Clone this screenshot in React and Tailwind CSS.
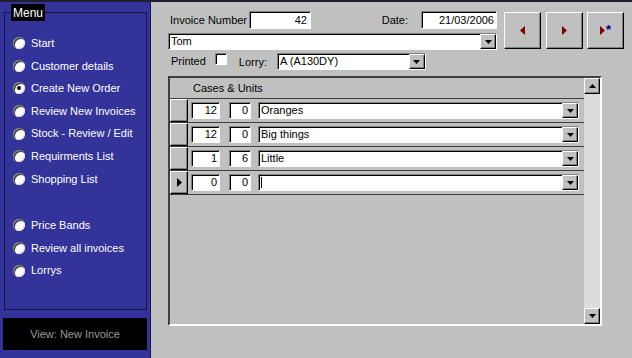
import React from 'react';

const MENU_TOP = [
  { label: 'Start' },
  { label: 'Customer details' },
  { label: 'Create New Order', on: true },
  { label: 'Review New Invoices' },
  { label: 'Stock - Review / Edit' },
  { label: 'Requirments List' },
  { label: 'Shopping List' },
];
const MENU_BOTTOM = ['Price Bands', 'Review all invoices', 'Lorrys'];

const LINES = [
  { cases: 12, units: 0, desc: 'Oranges' },
  { cases: 12, units: 0, desc: 'Big things' },
  { cases: 1, units: 6, desc: 'Little' },
  { cases: 0, units: 0, desc: '', current: true },
];

const sunken = 'bg-white text-black border border-t-[#808080] border-l-[#808080] border-b-white border-r-white shadow-[inset_1px_1px_0_#000]';
const raised = 'bg-[#c0c0c0] border border-t-white border-l-white border-b-[#000] border-r-[#000] shadow-[inset_-1px_-1px_0_#808080]';

function Radio({ on }) {
  return (
    <span className="w-[12px] h-[12px] rounded-full bg-white flex items-center justify-center shrink-0 shadow-[inset_1px_1px_0_#808080,inset_2px_2px_0_#404040,inset_-1px_-1px_0_#e0e0e0]">
      {on && <span className="w-[4px] h-[4px] rounded-full bg-black" />}
    </span>
  );
}

function DropArrow() {
  return (
    <span className={`${raised} w-[16px] h-full flex items-center justify-center shrink-0`}>
      <svg width="7" height="4" viewBox="0 0 7 4"><path d="M0 0h7L3.5 4z" fill="#000" /></svg>
    </span>
  );
}

function Combo({ value, className = '', cursor }) {
  return (
    <div className={`${sunken} flex items-stretch h-[17px] ${className}`}>
      <div className="flex-1 pl-[2px] flex items-center leading-none truncate">
        {cursor && <span className="w-[1px] h-[11px] bg-black" />}
        {value}
      </div>
      <DropArrow />
    </div>
  );
}

function NavButton({ children }) {
  return (
    <button className={`${raised} w-[37px] h-[37px] flex items-center justify-center`}>
      {children}
    </button>
  );
}

export default function App() {
  return (
    <div className="w-[632px] h-[358px] flex border-t-2 border-[#202030] overflow-hidden text-[11px] text-black" style={{ fontFamily: '"Liberation Sans", Arial, sans-serif' }}>
      {/* menu */}
      <div className="w-[151px] h-full bg-[#333399] border-r border-[#18184a] shrink-0 pt-[10px]">
        <div className="relative ml-[4px] w-[143px] h-[298px] border border-[#14144e] pt-[19px]">
          <div className="absolute -top-[9px] left-[6px] bg-black text-white px-[2px] h-[17px] flex items-center text-[12px]">Menu</div>
          {MENU_TOP.map(m => (
            <div key={m.label} className="h-[22.6px] flex items-center pl-[8px] gap-[6px] text-white">
              <Radio on={m.on} />
              <span>{m.label}</span>
            </div>
          ))}
          <div className="h-[24px]" />
          {MENU_BOTTOM.map(l => (
            <div key={l} className="h-[22.6px] flex items-center pl-[8px] gap-[6px] text-white">
              <Radio />
              <span>{l}</span>
            </div>
          ))}
        </div>
        <div className="ml-[3px] mt-[8px] w-[144px] h-[32px] bg-black text-[#9a9a9a] flex items-center justify-center">
          View: New Invoice
        </div>
      </div>

      {/* invoice form */}
      <div className="flex-1 bg-[#c0c0c0] pl-[17px]">
        <div className="flex items-start">
          <div className="w-[329px] pt-[9px]">
            <div className="h-[18px] flex items-center">
              <span className="w-[81px] pl-[2px]">Invoice Number</span>
              <div className={`${sunken} w-[62px] h-[18px] flex items-center justify-end pr-[3px]`}>42</div>
              <span className="ml-auto mr-[13px]">Date:</span>
              <div className={`${sunken} w-[76px] h-[18px] flex items-center justify-end pr-[2px]`}>21/03/2006</div>
            </div>
            <Combo value="Tom" className="mt-[4px]" />
            <div className="mt-[3px] h-[17px] flex items-center">
              <span className="pl-[3px]">Printed</span>
              <span className={`${sunken} ml-[9px] w-[12px] h-[12px] -mt-[5px]`} />
              <span className="ml-[12px] mt-[2px]">Lorry:</span>
              <Combo value="A (A130DY)" className="ml-[10px] w-[149px]" />
            </div>
          </div>
          <div className="ml-[7px] mt-[10px] flex gap-[4.5px]">
            <NavButton>
              <svg width="5" height="9" viewBox="0 0 5 9"><path d="M5 0v9L0 4.5z" fill="#800000" /></svg>
            </NavButton>
            <NavButton>
              <svg width="5" height="9" viewBox="0 0 5 9"><path d="M0 0v9l5-4.5z" fill="#800000" /></svg>
            </NavButton>
            <NavButton>
              <span className="flex items-center gap-[1px]">
                <svg width="5" height="9" viewBox="0 0 5 9"><path d="M0 0v9l5-4.5z" fill="#800000" /></svg>
                <span className="text-[#000080] font-bold text-[13px] leading-none -mt-[2px]">*</span>
              </span>
            </NavButton>
          </div>
        </div>

        {/* lines subform */}
        <div className="mt-[6px] w-[434px] h-[250px] border-2 border-t-[#404040] border-l-[#404040] border-b-white border-r-white flex">
          <div className="flex-1 flex flex-col">
            <div className="h-[21px] border-b border-[#404040] flex items-center pl-[23px]">Cases &amp; Units</div>
            {LINES.map((l, i) => (
              <div key={i} className="h-[24px] border-b border-[#404040] flex items-center">
                <div className={`${raised} w-[18px] h-full shrink-0 flex items-center justify-center`}>
                  {l.current && (
                    <svg width="5" height="9" viewBox="0 0 5 9"><path d="M0 0v9l5-4.5z" fill="#000" /></svg>
                  )}
                </div>
                <div className={`${sunken} ml-[3px] w-[29px] h-[17px] flex items-center justify-end pr-[2px]`}>{l.cases}</div>
                <div className={`${sunken} ml-[9px] w-[22px] h-[17px] flex items-center justify-end pr-[2px]`}>{l.units}</div>
                <Combo value={l.desc} cursor={l.current} className="ml-[7px] mr-[5px] flex-1" />
              </div>
            ))}
          </div>
          <div className="w-[16px] h-full flex flex-col">
            <div className={`${raised} h-[16px] flex items-center justify-center`}>
              <svg width="7" height="4" viewBox="0 0 7 4"><path d="M0 4h7L3.5 0z" fill="#000" /></svg>
            </div>
            <div className="flex-1 bg-[#dcdcdc]" />
            <div className={`${raised} h-[16px] flex items-center justify-center`}>
              <svg width="7" height="4" viewBox="0 0 7 4"><path d="M0 0h7L3.5 4z" fill="#000" /></svg>
            </div>
          </div>
        </div>
      </div>
    </div>
  );
}
